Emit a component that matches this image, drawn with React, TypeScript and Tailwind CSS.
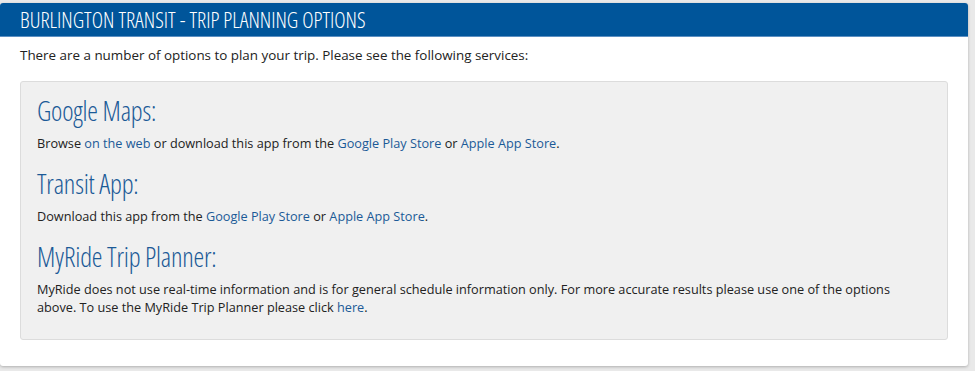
import React from "react";

const heading =
  "text-[27px] font-light leading-[30px] text-[#1b5a97] [font-stretch:75%] tracking-[-0.2px]";
const link = "text-[#1b5a97]";

const Section: React.FC<{ title: string; children: React.ReactNode; className?: string }> = ({
  title,
  children,
  className,
}) => (
  <div className={className}>
    <h3 className={heading}>{title}</h3>
    <p className="mt-[8px] text-[12.7px] leading-[18px] text-[#222]">{children}</p>
  </div>
);

export default function App() {
  return (
    <div
      className="h-[371px] w-[975px] bg-[#e9e9e9] pt-[3px] pr-[7px]"
      style={{ fontFamily: '"Open Sans", "Noto Sans", sans-serif' }}
    >
      <div className="h-[363px] rounded-[3px] bg-white shadow-[0_1px_3px_rgba(0,0,0,0.25)] overflow-hidden">
        <div className="h-[34px] border-b border-[#5b8fc2] bg-[#00559a] pl-[20px]">
          <h2 className="text-[21.5px] font-light leading-[34px] text-white [font-stretch:75%]">
            BURLINGTON TRANSIT - TRIP PLANNING OPTIONS
          </h2>
        </div>
        <div className="px-[20px] pt-[9px]">
          <p className="text-[13.4px] leading-[18px] text-[#222]">
            There are a number of options to plan your trip. Please see the following services:
          </p>
          <div className="mt-[17px] h-[259px] rounded-[3px] border border-[#dcdcdc] bg-[#f0f0f0] px-[16px] pt-[14px]">
            <Section title="Google Maps:">
              Browse <a className={link}>on the web</a> or download this app from the{" "}
              <a className={link}>Google Play Store</a> or <a className={link}>Apple App Store</a>.
            </Section>
            <Section title="Transit App:" className="mt-[17px]">
              Download this app from the <a className={link}>Google Play Store</a> or{" "}
              <a className={link}>Apple App Store</a>.
            </Section>
            <Section title="MyRide Trip Planner:" className="mt-[17px]">
              MyRide does not use real-time information and is for general schedule information only. For
              more accurate results please use one of the options above. To use the MyRide Trip Planner
              please click <a className={link}>here</a>.
            </Section>
          </div>
        </div>
      </div>
    </div>
  );
}
